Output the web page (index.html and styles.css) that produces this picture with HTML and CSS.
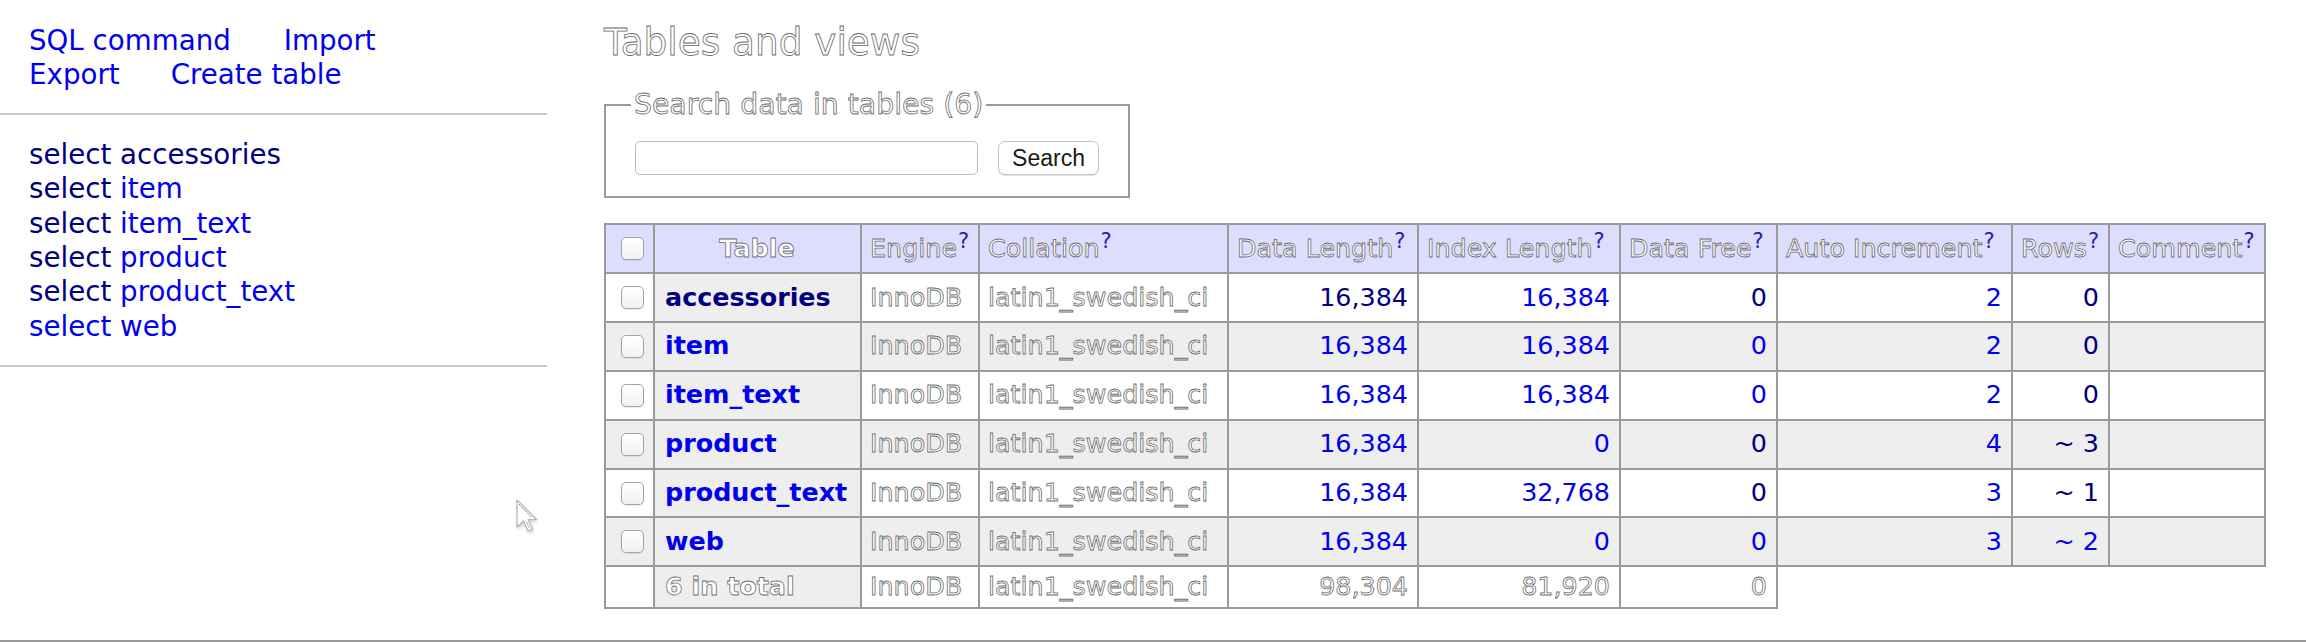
FILE: index.html
```html
<!DOCTYPE html>
<html lang="en">
<head>
<meta charset="utf-8">
<title>Adminer – Tables and views</title>
<link rel="stylesheet" href="styles.css">
</head>
<body>
<div class="page">
  <nav class="menu">
    <p class="links">
      <a href="#">SQL command</a>
      <a href="#">Import</a>
      <a href="#">Export</a>
      <a href="#">Create table</a>
    </p>
    <ul class="tables">
      <li><a class="visited" href="#">select</a> <a class="visited" href="#">accessories</a></li>
      <li><a class="visited" href="#">select</a> <a href="#">item</a></li>
      <li><a class="visited" href="#">select</a> <a href="#">item_text</a></li>
      <li><a class="visited" href="#">select</a> <a href="#">product</a></li>
      <li><a class="visited" href="#">select</a> <a href="#">product_text</a></li>
      <li><a href="#">select</a> <a href="#">web</a></li>
    </ul>
  </nav>

  <main class="content">
    <h3 class="title ghost">Tables and views</h3>

    <fieldset class="search">
      <legend class="ghost">Search data in tables (6)</legend>
      <div class="search-row">
        <input class="query" type="text" aria-label="Search">
        <button class="btn" type="button">Search</button>
      </div>
    </fieldset>

    <table class="list">
      <colgroup>
        <col class="c-check">
        <col class="c-name">
        <col class="c-engine">
        <col class="c-coll">
        <col class="c-dlen">
        <col class="c-ilen">
        <col class="c-free">
        <col class="c-auto">
        <col class="c-rows">
        <col class="c-comm">
      </colgroup>
      <thead>
        <tr>
          <td class="check"><span class="box"></span></td>
          <th class="ghost">Table</th>
          <td><span class="ghost">Engine</span><sup>?</sup></td>
          <td><span class="ghost">Collation</span><sup>?</sup></td>
          <td><span class="ghost">Data Length</span><sup>?</sup></td>
          <td><span class="ghost">Index Length</span><sup>?</sup></td>
          <td><span class="ghost">Data Free</span><sup>?</sup></td>
          <td><span class="ghost">Auto Increment</span><sup>?</sup></td>
          <td><span class="ghost">Rows</span><sup>?</sup></td>
          <td><span class="ghost">Comment</span><sup>?</sup></td>
        </tr>
      </thead>
      <tbody>
        <tr>
          <td class="check"><span class="box"></span></td>
          <th><a class="visited" href="#">accessories</a></th>
          <td class="ghost">InnoDB</td>
          <td class="ghost">latin1_swedish_ci</td>
          <td class="num"><a class="visited" href="#">16,384</a></td>
          <td class="num"><a href="#">16,384</a></td>
          <td class="num"><a class="visited" href="#">0</a></td>
          <td class="num"><a href="#">2</a></td>
          <td class="num"><a class="visited" href="#">0</a></td>
          <td></td>
        </tr>
        <tr class="odd">
          <td class="check"><span class="box"></span></td>
          <th><a href="#">item</a></th>
          <td class="ghost">InnoDB</td>
          <td class="ghost">latin1_swedish_ci</td>
          <td class="num"><a href="#">16,384</a></td>
          <td class="num"><a href="#">16,384</a></td>
          <td class="num"><a href="#">0</a></td>
          <td class="num"><a href="#">2</a></td>
          <td class="num"><a class="visited" href="#">0</a></td>
          <td></td>
        </tr>
        <tr>
          <td class="check"><span class="box"></span></td>
          <th><a href="#">item_text</a></th>
          <td class="ghost">InnoDB</td>
          <td class="ghost">latin1_swedish_ci</td>
          <td class="num"><a href="#">16,384</a></td>
          <td class="num"><a href="#">16,384</a></td>
          <td class="num"><a href="#">0</a></td>
          <td class="num"><a href="#">2</a></td>
          <td class="num"><a class="visited" href="#">0</a></td>
          <td></td>
        </tr>
        <tr class="odd">
          <td class="check"><span class="box"></span></td>
          <th><a href="#">product</a></th>
          <td class="ghost">InnoDB</td>
          <td class="ghost">latin1_swedish_ci</td>
          <td class="num"><a href="#">16,384</a></td>
          <td class="num"><a href="#">0</a></td>
          <td class="num"><a class="visited" href="#">0</a></td>
          <td class="num"><a href="#">4</a></td>
          <td class="num"><a class="visited" href="#">~ 3</a></td>
          <td></td>
        </tr>
        <tr>
          <td class="check"><span class="box"></span></td>
          <th><a href="#">product_text</a></th>
          <td class="ghost">InnoDB</td>
          <td class="ghost">latin1_swedish_ci</td>
          <td class="num"><a href="#">16,384</a></td>
          <td class="num"><a href="#">32,768</a></td>
          <td class="num"><a class="visited" href="#">0</a></td>
          <td class="num"><a href="#">3</a></td>
          <td class="num"><a class="visited" href="#">~ 1</a></td>
          <td></td>
        </tr>
        <tr class="odd">
          <td class="check"><span class="box"></span></td>
          <th><a href="#">web</a></th>
          <td class="ghost">InnoDB</td>
          <td class="ghost">latin1_swedish_ci</td>
          <td class="num"><a href="#">16,384</a></td>
          <td class="num"><a href="#">0</a></td>
          <td class="num"><a href="#">0</a></td>
          <td class="num"><a href="#">3</a></td>
          <td class="num"><a href="#">~ 2</a></td>
          <td></td>
        </tr>
        <tr class="total">
          <td></td>
          <th class="ghost">6 in total</th>
          <td class="ghost">InnoDB</td>
          <td class="ghost">latin1_swedish_ci</td>
          <td class="num ghost">98,304</td>
          <td class="num ghost">81,920</td>
          <td class="num ghost">0</td>
        </tr>
      </tbody>
    </table>
  </main>

  <svg class="cursor" width="28" height="40" viewBox="0 0 28 40" aria-hidden="true">
    <path d="M3 3 L3 30 L9.5 24 L14 34 L18.5 32 L14 22.5 L22.5 22.5 Z" fill="#fff" stroke="#b5b5b5" stroke-width="1.2" stroke-linejoin="round"/>
    <path d="M5 7 L17 20" stroke="#444" stroke-width="0.9" stroke-dasharray="1.2 1.2" fill="none"/>
    <path d="M12.5 25 L15.5 31" stroke="#555" stroke-width="0.9" stroke-dasharray="1.2 1.2" fill="none"/>
  </svg>
</div>
</body>
</html>
```

FILE: styles.css
```css
* {
  box-sizing: border-box;
}

html,
body {
  margin: 0;
  background: #fff;
}

body {
  font-family: "DejaVu Sans", Verdana, sans-serif;
  font-size: 28px;
  color: #000;
}

a {
  color: #0000f0;
  text-decoration: none;
}

a.visited {
  color: #000080;
}

/* text that the reference shows as hollow outlines */
.ghost {
  color: #fff;
  -webkit-text-stroke: 0.8px #6e6e6e;
}

.page {
  position: relative;
  width: 2306px;
  height: 642px;
  border-bottom: 2px solid #9a9a9a;
  display: flex;
  overflow: hidden;
}

/* ---------- left menu ---------- */
.menu {
  width: 547px;
  flex: none;
  font-size: 27.7px;
  line-height: 34.3px;
}

.links {
  margin: 0;
  padding: 24px 100px 20px 29px;
  border-bottom: 2px solid #cacaca;
  display: flex;
  flex-wrap: wrap;
  column-gap: 51px;
}

.links a {
  white-space: nowrap;
}

.links a:nth-child(2) {
  margin-left: 2px;
}

.tables {
  margin: 0;
  padding: 23.6px 29px 21px;
  list-style: none;
  border-bottom: 2px solid #cacaca;
}

/* ---------- content ---------- */
.content {
  flex: none;
  margin-left: 57px;
  padding-top: 20px;
}

.title {
  margin: 0;
  font-size: 37.4px;
  line-height: 44px;
  font-weight: normal;
  -webkit-text-stroke: 0.8px #6a6a6a;
}

.search {
  display: block;
  width: fit-content;
  margin: 24px 0 0;
  padding: 19px 29px 21px;
  border: 2px solid #9a9a9a;
}

.search legend {
  font-size: 28.3px;
  line-height: 34px;
  padding: 0 3px;
  margin-left: -4px;
}

.search-row {
  display: flex;
  align-items: center;
  gap: 20px;
}

.query {
  width: 343px;
  height: 34px;
  margin: 0;
  border: 1.5px solid #bcbcbc;
  border-radius: 5px;
  background: #fff;
}

.btn {
  width: 101px;
  height: 34px;
  margin: 0;
  padding: 0;
  border: 1px solid #c4c4c4;
  border-radius: 7px;
  background: #fff;
  box-shadow: 0 1px 1px rgba(0, 0, 0, 0.12);
  font-family: "Liberation Sans", Arial, sans-serif;
  font-size: 23px;
  color: #1a1a1a;
}

/* ---------- table list ---------- */
.list {
  margin-top: 25px;
  border-collapse: collapse;
  table-layout: fixed;
  width: 1662px;
  font-size: 25.4px;
  line-height: 31.75px;
}

.c-check { width: 49px; }
.c-name { width: 207px; }
.c-engine { width: 118px; }
.c-coll { width: 249px; }
.c-dlen { width: 190px; }
.c-ilen { width: 202px; }
.c-free { width: 157px; }
.c-auto { width: 235px; }
.c-rows { width: 97px; }
.c-comm { width: 156px; }

.list td,
.list th {
  border: 2px solid #9a9a9a;
  padding: 0 9px 0 8px;
  white-space: nowrap;
  overflow: hidden;
  vertical-align: middle;
}

.list thead tr {
  height: 49px;
}

.list tbody tr {
  height: 48.9px;
}

.list tbody tr.total {
  height: 41.5px;
}

.list thead td,
.list thead th {
  background: #ddf;
}

.list thead th {
  text-align: center;
}

.list tbody th {
  background: #eee;
  text-align: left;
  padding-left: 10px;
}

.list tbody tr.odd td {
  background: #eee;
}

.list .num {
  text-align: right;
}

.list sup {
  font-size: 21px;
  line-height: 0;
  vertical-align: 9px;
  color: #2424a6;
  margin-left: 1px;
}

.check {
  padding-left: 6px;
}

.box {
  display: block;
  width: 23px;
  height: 23px;
  margin-left: 7px;
  border: 1.5px solid #a4a4a4;
  border-radius: 5px;
  background: linear-gradient(#ffffff, #f1f1f1);
  box-shadow: 0 1px 1px rgba(0, 0, 0, 0.08);
}

/* mouse pointer lying over the page */
.cursor {
  position: absolute;
  left: 514px;
  top: 497px;
  filter: drop-shadow(1px 2px 1.5px rgba(0, 0, 0, 0.18));
}
```
